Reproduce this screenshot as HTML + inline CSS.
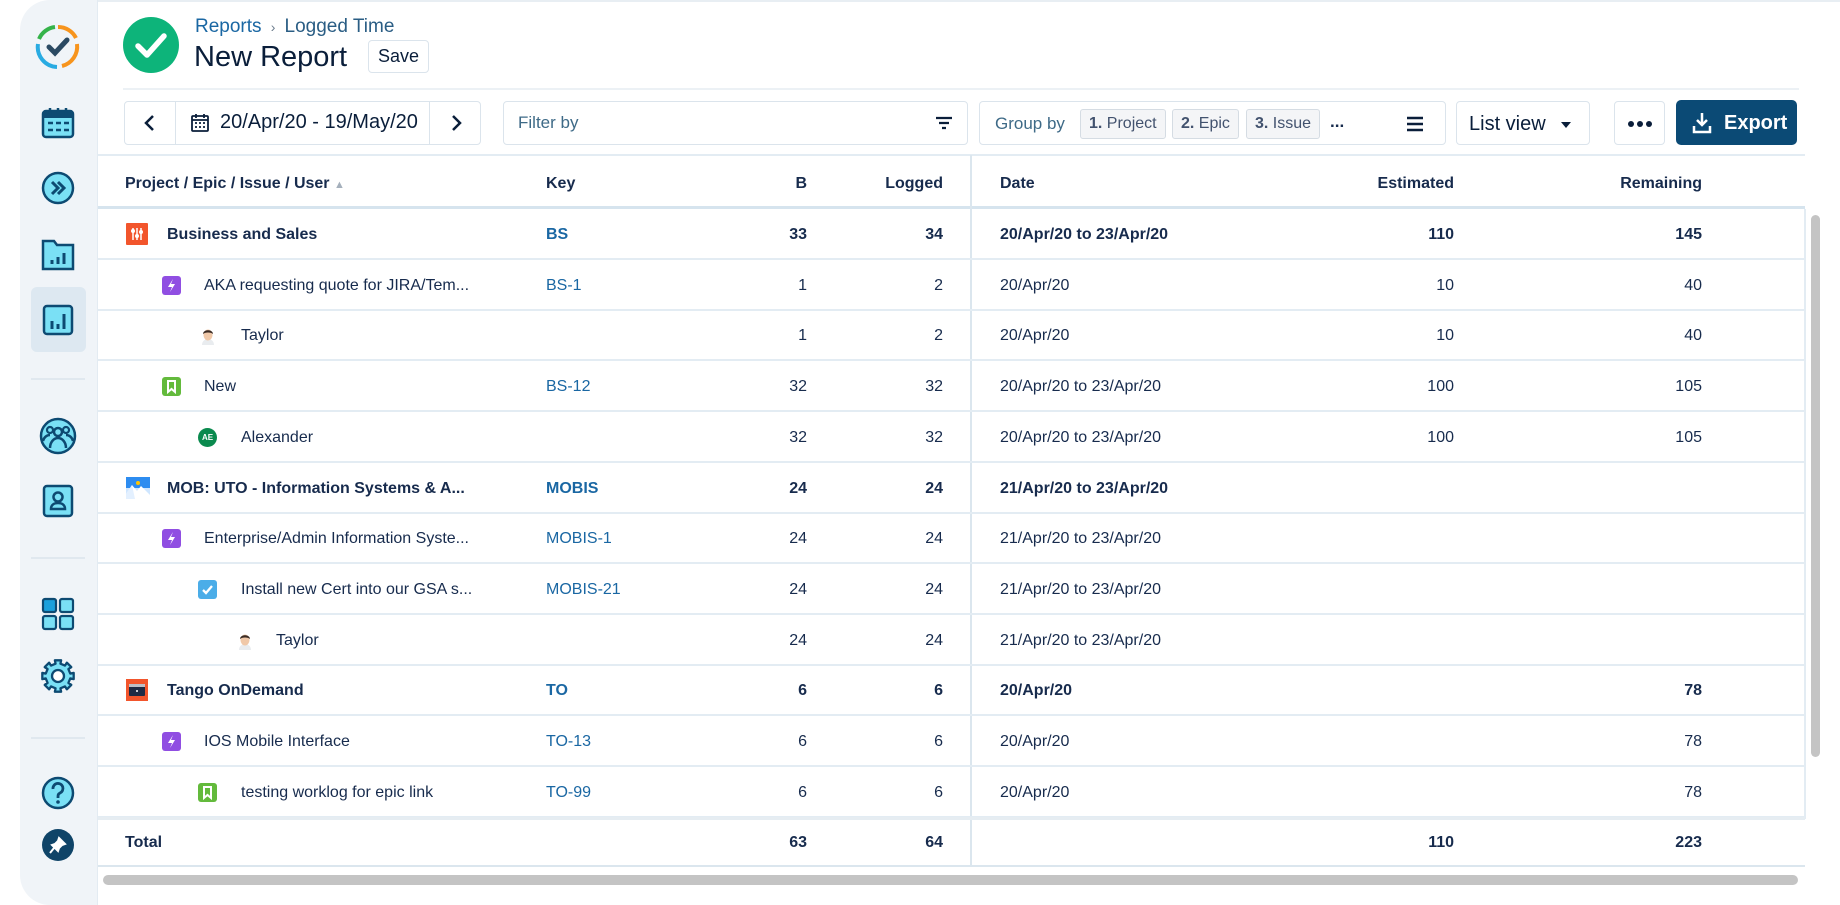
<!DOCTYPE html>
<html><head><meta charset="utf-8"><style>
*{box-sizing:border-box;margin:0;padding:0}
body{width:1840px;height:900px;overflow:hidden;background:#fff;font-family:"Liberation Sans",Arial,sans-serif;color:#172b4d;position:relative}
.abs{position:absolute}
.side{left:20px;top:0;width:78px;height:905px;background:#f0f4f8;border-radius:30px 0 0 30px;border-right:1px solid #e3ebf2}
.ico{position:absolute;left:41px;width:34px;height:34px}
.sep{position:absolute;left:31px;width:54px;height:2px;background:#e0e8ef}
.btn{border:1px solid #dbe4ec;border-radius:4px;background:#fff}
.chip{position:absolute;top:7px;height:30px;border:1px solid #d5dce3;border-radius:3px;background:#f4f5f7;font-size:16px;line-height:28px;padding:0 8px;color:#42526e}
.row{position:absolute;left:98px;width:1707px;height:51px;border-bottom:2px solid #e3ecf3;font-size:16px}
.row div{position:absolute;top:0;line-height:51px;white-space:nowrap}
.b{font-weight:bold}
.r{text-align:right}
.k{color:#1a67a3}
.row .ic{position:absolute;top:16px;width:19px;height:19px;border-radius:3px;line-height:0}
.row .ic svg{display:block}
</style></head><body>
<div class="abs side"></div>
<svg class="abs" style="left:35px;top:24px" width="46" height="46" viewBox="0 0 46 46"><path d="M23 3A20 20 0 0 1 41 14" stroke="#f7941d" stroke-width="4" fill="none"/><path d="M42 20A20 20 0 0 1 27 42" stroke="#f7941d" stroke-width="4" fill="none"/><path d="M20 3A20 20 0 0 0 4 15" stroke="#35b34a" stroke-width="4" fill="none"/><path d="M3 20A20 20 0 0 0 22 43" stroke="#29abe2" stroke-width="4" fill="none"/><path d="M14 23l6 6 12-13" stroke="#2b4a63" stroke-width="5" fill="none" stroke-linecap="round"/></svg>
<svg class="ico" style="top:106px" viewBox="0 0 34 34"><rect x="2" y="5" width="30" height="26" rx="3" fill="#7ae0f5" stroke="#0d4a72" stroke-width="2.5"/><rect x="2" y="5" width="30" height="7" fill="#0d4a72"/><path d="M9 2v6M17 2v6M25 2v6" stroke="#0d4a72" stroke-width="2.5"/><path d="M7 17h5M15 17h5M23 17h5M7 24h5M15 24h5M23 24h5" stroke="#0d4a72" stroke-width="2.5"/></svg>
<svg class="ico" style="top:171px" viewBox="0 0 34 34"><circle cx="17" cy="17" r="15" fill="#7ae0f5" stroke="#0d4a72" stroke-width="2.5"/><path d="M11 11l6 6-6 6M17 11l6 6-6 6" stroke="#0d4a72" stroke-width="3" fill="none"/></svg>
<svg class="ico" style="top:238px" viewBox="0 0 34 34"><path d="M2 3h11l3 4h16v24H2z" fill="#7ae0f5" stroke="#0d4a72" stroke-width="2.5"/><path d="M11 26v-4M17 26v-7M23 26v-11" stroke="#0d4a72" stroke-width="3"/></svg>
<div class="abs" style="left:31px;top:287px;width:55px;height:65px;background:#dde8f1;border-radius:6px"></div>
<svg class="ico" style="top:303px" viewBox="0 0 34 34"><rect x="3" y="3" width="28" height="28" rx="3" fill="#7ae0f5" stroke="#0d4a72" stroke-width="2.5"/><path d="M11 26v-8M17 26v-5M23 26v-15" stroke="#0d4a72" stroke-width="3"/></svg>
<div class="sep" style="top:378px"></div>
<svg class="ico" style="top:417px;width:38px;height:38px;left:39px" viewBox="0 0 38 38"><circle cx="19" cy="19" r="17" fill="#7ae0f5" stroke="#0d4a72" stroke-width="2.5"/><circle cx="19" cy="15" r="4" fill="none" stroke="#0d4a72" stroke-width="2.5"/><circle cx="11" cy="13" r="3" fill="none" stroke="#0d4a72" stroke-width="2.2"/><circle cx="27" cy="13" r="3" fill="none" stroke="#0d4a72" stroke-width="2.2"/><path d="M11 31c0-6 4-10 8-10s8 4 8 10M4 24c1-4 4-6 7-6M34 24c-1-4-4-6-7-6" stroke="#0d4a72" stroke-width="2.5" fill="none"/></svg>
<svg class="ico" style="top:484px" viewBox="0 0 34 34"><rect x="3" y="2" width="28" height="30" rx="3" fill="#7ae0f5" stroke="#0d4a72" stroke-width="2.5"/><circle cx="17" cy="13" r="4.5" fill="none" stroke="#0d4a72" stroke-width="2.5"/><path d="M10 25c0-4 3-6 7-6s7 2 7 6z" fill="none" stroke="#0d4a72" stroke-width="2.5"/></svg>
<div class="sep" style="top:557px"></div>
<svg class="ico" style="top:597px" viewBox="0 0 34 34"><g fill="#7ae0f5" stroke="#0d4a72" stroke-width="2.2"><rect x="2" y="2" width="13" height="13" rx="2" fill="#1aa0dc"/><rect x="19" y="2" width="13" height="13" rx="2"/><rect x="2" y="19" width="13" height="13" rx="2"/><rect x="19" y="19" width="13" height="13" rx="2"/></g></svg>
<svg class="ico" style="top:657px;left:39px;width:38px;height:38px" viewBox="-19 -19 38 38"><path id="gear" fill="#7ae0f5" stroke="#0d4a72" stroke-width="2.3" stroke-linejoin="round"/><circle r="6" fill="#fff" stroke="#0d4a72" stroke-width="2.3"/></svg>
<div class="sep" style="top:737px"></div>
<svg class="ico" style="top:776px" viewBox="0 0 34 34"><circle cx="17" cy="17" r="15" fill="#7ae0f5" stroke="#0d4a72" stroke-width="2.5"/><path d="M12 13a5 5 0 1 1 7 4c-2 1-2 2-2 5" stroke="#0d4a72" stroke-width="2.8" fill="none"/><circle cx="17" cy="26" r="1.8" fill="#0d4a72"/></svg>
<svg class="ico" style="top:828px" viewBox="0 0 34 34"><circle cx="17" cy="17" r="16" fill="#0f4468"/><path d="M18 10l6 6-3 1-3 3-1 3-6-6 3-1 3-3zM13 20l-4 5" stroke="#fff" stroke-width="2" fill="#fff"/></svg>

<div class="abs" style="left:98px;top:0;width:1742px;height:2px;background:#e8eef3"></div>
<svg class="abs" style="left:123px;top:17px" width="56" height="56" viewBox="0 0 56 56"><circle cx="28" cy="28" r="28" fill="#0db47a"/><path d="M15 29l9 9 17-19" stroke="#fff" stroke-width="5.5" fill="none" stroke-linecap="round" stroke-linejoin="round"/></svg>
<div class="abs" style="left:195px;top:16px;font-size:19px;color:#2a5d84"><span style="color:#1a67a3">Reports</span> <span style="font-size:14px;color:#6b7b8c">&nbsp;›&nbsp;</span> Logged Time</div>
<div class="abs" style="left:194px;top:41px;font-size:29px;color:#0a1e3a">New Report</div>
<div class="abs btn" style="left:368px;top:40px;width:61px;height:33px;font-size:18px;line-height:31px;text-align:center;color:#0a1e3a">Save</div>
<div class="abs" style="left:123px;top:88px;width:1676px;height:2px;background:#ecf1f5"></div>

<div class="abs btn" style="left:124px;top:101px;width:357px;height:44px"></div>
<div class="abs" style="left:175px;top:102px;width:1px;height:42px;background:#dbe4ec"></div>
<div class="abs" style="left:429px;top:102px;width:1px;height:42px;background:#dbe4ec"></div>
<svg class="abs" style="left:140px;top:113px" width="20" height="20"><path d="M13 3l-7 7 7 7" stroke="#0a1e3a" stroke-width="2.5" fill="none"/></svg>
<svg class="abs" style="left:446px;top:113px" width="20" height="20"><path d="M7 3l7 7-7 7" stroke="#0a1e3a" stroke-width="2.5" fill="none"/></svg>
<svg class="abs" style="left:190px;top:113px" width="20" height="20" viewBox="0 0 20 20"><rect x="2" y="3" width="16" height="15" rx="1" fill="none" stroke="#0a1e3a" stroke-width="1.8"/><path d="M2 7h16M6 1v4M14 1v4" stroke="#0a1e3a" stroke-width="1.8"/><path d="M5 10h2M9 10h2M13 10h2M5 14h2M9 14h2M13 14h2" stroke="#0a1e3a" stroke-width="1.8"/></svg>
<div class="abs" style="left:220px;top:111px;font-size:20px;color:#0a1e3a">20/Apr/20 - 19/May/20</div>
<div class="abs btn" style="left:503px;top:101px;width:465px;height:44px"></div>
<div class="abs" style="left:518px;top:113px;font-size:17px;color:#3e6a87">Filter by</div>
<svg class="abs" style="left:935px;top:114px" width="18" height="18"><path d="M1 4h16M4 9h10M7 14h4" stroke="#0a1e3a" stroke-width="2.2"/></svg>
<div class="abs btn" style="left:979px;top:101px;width:467px;height:44px">
<div class="abs" style="left:15px;top:12px;font-size:17px;color:#3e6a87">Group by</div>
<div class="chip" style="left:100px"><b>1.</b> Project</div>
<div class="chip" style="left:192px"><b>2.</b> Epic</div>
<div class="chip" style="left:266px"><b>3.</b> Issue</div>
<div class="abs" style="left:350px;top:10px;font-size:17px;font-weight:bold">...</div>
<svg class="abs" style="left:426px;top:13px" width="18" height="18"><path d="M1 3h16M1 9h16M1 15h16" stroke="#0a1e3a" stroke-width="2.5"/></svg>
</div>
<div class="abs btn" style="left:1456px;top:101px;width:134px;height:44px"><div class="abs" style="left:12px;top:11px;font-size:20px;color:#0a1e3a">List view</div><svg class="abs" style="left:104px;top:19px" width="10" height="8"><path d="M0 1h10L5 7z" fill="#0a1e3a"/></svg></div>
<div class="abs btn" style="left:1614px;top:101px;width:51px;height:44px"><svg class="abs" style="left:13px;top:18px" width="24" height="8"><circle cx="3" cy="4" r="3" fill="#0a1e3a"/><circle cx="12" cy="4" r="3" fill="#0a1e3a"/><circle cx="21" cy="4" r="3" fill="#0a1e3a"/></svg></div>
<div class="abs" style="left:1676px;top:100px;width:121px;height:45px;background:#0b4a75;border-radius:5px"><svg class="abs" style="left:16px;top:12px" width="20" height="22"><path d="M10 1v12M5 8l5 5 5-5M2 14v6h16v-6" stroke="#fff" stroke-width="2.5" fill="none"/></svg><div class="abs" style="left:48px;top:12px;font-size:20px;font-weight:bold;color:#fff">Export</div></div>

<div class="abs" style="left:98px;top:154px;width:1707px;height:2px;background:#e3ecf3"></div>
<div class="abs" style="left:98px;top:155px;width:1707px;height:54px;border-bottom:3px solid #d6e4ee;font-size:16px;font-weight:bold">
<div class="abs" style="left:27px;top:20px">Project / Epic / Issue / User <span style="color:#a5b0bc;font-size:11px">▲</span></div>
<div class="abs" style="left:448px;top:20px">Key</div>
<div class="abs r" style="right:998px;top:20px">B</div>
<div class="abs r" style="right:862px;top:20px">Logged</div>
<div class="abs" style="left:902px;top:20px">Date</div>
<div class="abs r" style="right:351px;top:20px">Estimated</div>
<div class="abs r" style="right:103px;top:20px">Remaining</div>
</div>
<div class="abs" style="left:970px;top:155px;width:2px;height:711px;background:#dbe6ee"></div>
<div class="abs" style="left:1804px;top:209px;width:2px;height:610px;background:#e3ecf3"></div>
<div class="abs" style="left:1811px;top:215px;width:9px;height:542px;background:#c4c4c4;border-radius:5px"></div>

<div id="rows"></div>
<div class="row b" style="top:817px;height:50px;border-top:3px solid #e6edf2;border-bottom:2px solid #dbe6ee">
<div style="left:27px;line-height:45px">Total</div><div class="r" style="right:998px;line-height:45px">63</div><div class="r" style="right:862px;line-height:45px">64</div><div class="r" style="right:351px;line-height:45px">110</div><div class="r" style="right:103px;line-height:45px">223</div></div>
<div class="abs" style="left:103px;top:875px;width:1695px;height:10px;background:#c4c4c4;border-radius:5px"></div>

<script>
(function(){var d='';for(var i=0;i<16;i++){var a=i*Math.PI/8-Math.PI/16;var r=(i%2==0)?16:12.5;var a2=a+Math.PI/8;d+=(i?'L':'M')+(r*Math.cos(a)).toFixed(2)+' '+(r*Math.sin(a)).toFixed(2)+'L'+(r*Math.cos(a2)).toFixed(2)+' '+(r*Math.sin(a2)).toFixed(2);}document.getElementById('gear').setAttribute('d',d+'Z');})();
var R=[
[0,'proj1','Business and Sales','BS','33','34','20/Apr/20 to 23/Apr/20','110','145'],
[1,'epic','AKA requesting quote for JIRA/Tem...','BS-1','1','2','20/Apr/20','10','40'],
[2,'av','Taylor','','1','2','20/Apr/20','10','40'],
[1,'story','New','BS-12','32','32','20/Apr/20 to 23/Apr/20','100','105'],
[2,'ae','Alexander','','32','32','20/Apr/20 to 23/Apr/20','100','105'],
[0,'proj2','MOB: UTO - Information Systems &amp; A...','MOBIS','24','24','21/Apr/20 to 23/Apr/20','',''],
[1,'epic','Enterprise/Admin Information Syste...','MOBIS-1','24','24','21/Apr/20 to 23/Apr/20','',''],
[2,'task','Install new Cert into our GSA s...','MOBIS-21','24','24','21/Apr/20 to 23/Apr/20','',''],
[3,'av','Taylor','','24','24','21/Apr/20 to 23/Apr/20','',''],
[0,'proj3','Tango OnDemand','TO','6','6','20/Apr/20','','78'],
[1,'epic','IOS Mobile Interface','TO-13','6','6','20/Apr/20','','78'],
[2,'story','testing worklog for epic link','TO-99','6','6','20/Apr/20','','78']];
var icons={
proj1:'<div class="ic" style="width:22px;height:22px;top:14px;background:#f2552c;border-radius:1px"><svg width="22" height="22"><path d="M7 5v12M11 5v12M15 5v12" stroke="#fff" stroke-width="1.5"/><circle cx="7" cy="8" r="2" fill="#fff"/><circle cx="11" cy="13" r="2" fill="#fff"/><circle cx="15" cy="9" r="2" fill="#fff"/></svg></div>',
proj2:'<div class="ic" style="width:24px;height:22px;top:14px;background:#cfe6ff;border-radius:0"><svg width="24" height="22"><rect width="24" height="11" fill="#2d8cf0"/><path d="M0 17l6-9 5 6 4-5 9 9v4H0z" fill="#fff"/><path d="M0 22V17l6-9 3 14z" fill="#e3f0ff"/><circle cx="12" cy="6" r="2" fill="#ffc400"/></svg></div>',
proj3:'<div class="ic" style="width:22px;height:22px;top:14px;background:#f2552c;border-radius:0"><svg width="22" height="22"><rect x="3" y="5" width="16" height="12" rx="1" fill="#1e2a44"/><rect x="3" y="5" width="16" height="3" fill="#fff" opacity=".7"/><circle cx="11" cy="12" r="1" fill="#fff"/></svg></div>',
epic:'<div class="ic" style="background:#904ee2"><svg width="19" height="19"><path d="M11 3L6 11h4l-2 5 5-8H9z" fill="#fff"/></svg></div>',
story:'<div class="ic" style="background:#63ba3c"><svg width="19" height="19"><path d="M6 4h7v11l-3.5-3L6 15z" fill="none" stroke="#fff" stroke-width="2"/></svg></div>',
task:'<div class="ic" style="background:#4bade8"><svg width="19" height="19"><path d="M5 10l3 3 6-7" stroke="#fff" stroke-width="2.3" fill="none"/></svg></div>',
av:'<div class="ic" style="width:16px;height:19px;top:16px;border-radius:0"><svg width="16" height="19"><path d="M2 19c0-4 3-6 6-6s6 2 6 6z" fill="#e9ecef"/><ellipse cx="8" cy="9" rx="4.5" ry="5.5" fill="#f0c8a8"/><path d="M3 8c0-5 10-5 10 0c-2-2-8-2-10 0z" fill="#3a2b24"/></svg></div>',
ae:'<div class="ic" style="width:19px;height:19px;border-radius:50%;background:#0a8a4e;color:#fff;font-size:8px;font-weight:bold;line-height:19px;text-align:center">AE</div>'};
var icx=[28,64,100,137],tx=[69,106,143,178],h='';
R.forEach(function(r,i){var b=r[0]==0?' b':'';var ix=icx[r[0]],t=tx[r[0]];
if(r[1]=='av'){ix+=2}
h+='<div class="row'+b+'" style="top:'+(209+i*50.7)+'px">'+icons[r[1]].replace('class="ic" style="','class="ic" style="left:'+ix+'px;')+
'<div style="left:'+t+'px">'+r[2]+'</div><div class="k" style="left:448px">'+r[3]+'</div><div class="r" style="right:998px">'+r[4]+'</div><div class="r" style="right:862px">'+r[5]+'</div><div style="left:902px">'+r[6]+'</div><div class="r" style="right:351px">'+r[7]+'</div><div class="r" style="right:103px">'+r[8]+'</div></div>';});
document.getElementById('rows').innerHTML=h;
</script>
</body></html>
